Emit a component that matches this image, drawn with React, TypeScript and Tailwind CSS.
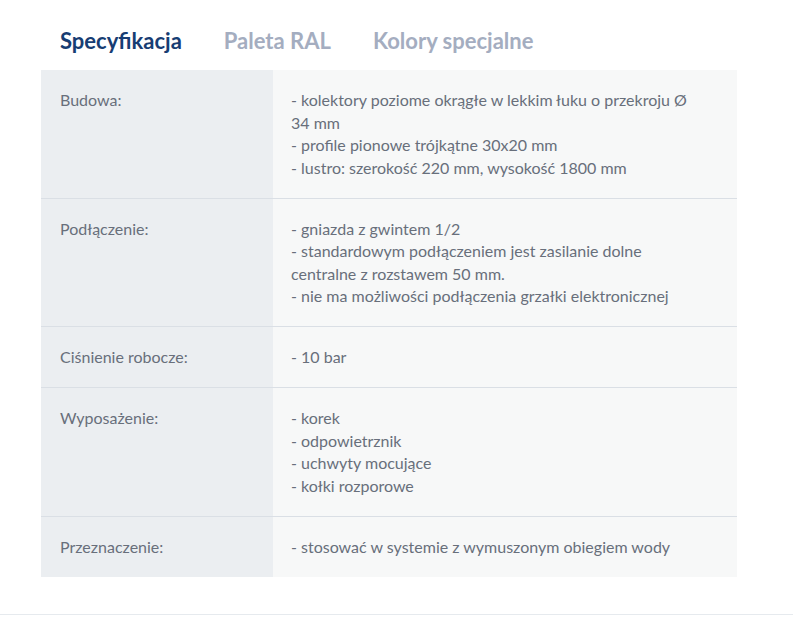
const rows: { label: string; lines: string[] }[] = [
  {
    label: "Budowa:",
    lines: [
      "- kolektory poziome okrągłe w lekkim łuku o przekroju Ø 34 mm",
      "- profile pionowe trójkątne 30x20 mm",
      "- lustro: szerokość 220 mm, wysokość 1800 mm",
    ],
  },
  {
    label: "Podłączenie:",
    lines: [
      "- gniazda z gwintem 1/2",
      "- standardowym podłączeniem jest zasilanie dolne centralne z rozstawem 50 mm.",
      "- nie ma możliwości podłączenia grzałki elektronicznej",
    ],
  },
  { label: "Ciśnienie robocze:", lines: ["- 10 bar"] },
  {
    label: "Wyposażenie:",
    lines: ["- korek", "- odpowietrznik", "- uchwyty mocujące", "- kołki rozporowe"],
  },
  { label: "Przeznaczenie:", lines: ["- stosować w systemie z wymuszonym obiegiem wody"] },
];

const tabs = ["Specyfikacja", "Paleta RAL", "Kolory specjalne"];

export default function App() {
  return (
    <div className="w-[793px] h-[625px] bg-white font-['Lato','Liberation_Sans',sans-serif]">
      <div className="flex gap-[42px] pl-[60px] pt-[26px] h-[70px]">
        {tabs.map((t, i) => (
          <span
            key={t}
            className={`text-[22px] font-bold leading-[29px] ${i === 0 ? "text-[#173d73]" : "text-[#a4adc0]"}`}
          >
            {t}
          </span>
        ))}
      </div>
      <div className="ml-[41px] w-[696px]">
        {rows.map((r, i) => (
          <div
            key={r.label}
            className={`flex ${i < rows.length - 1 ? "border-b border-[#dadfe5]" : ""}`}
          >
            <div className="w-[232px] shrink-0 bg-[#ebeef1] px-[19px] pt-[19px] pb-[18.5px] text-[16px] leading-[22.5px] text-[#686f7b]">
              {r.label}
            </div>
            <div className="flex-1 bg-[#f7f8f8] pl-[18px] pr-[40px] pt-[19px] pb-[18.5px] text-[16px] leading-[22.5px] text-[#686f7b]">
              {r.lines.map((l) => (
                <div key={l}>{l}</div>
              ))}
            </div>
          </div>
        ))}
      </div>
      <div className="mt-[37px] border-t border-[#e6eaee]" />
    </div>
  );
}
